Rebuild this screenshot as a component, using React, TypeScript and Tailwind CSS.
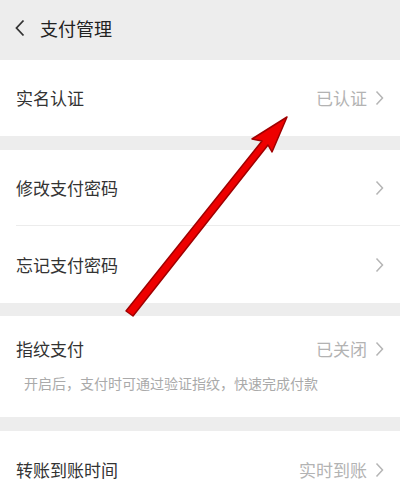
import React from "react";

const font = { fontFamily: '"Noto Sans CJK SC", "Noto Sans", sans-serif' };

const Chevron = () => (
  <svg width="9" height="16" viewBox="0 0 9 16" className="ml-2 shrink-0">
    <path d="M1.5 1.5 L7.5 8 L1.5 14.5" fill="none" stroke="#b5b5b5" strokeWidth="1.5" />
  </svg>
);

type RowProps = { label: string; value?: string; h: string };

const Row = ({ label, value, h }: RowProps) => (
  <div className={`flex items-center justify-between pl-4 pr-4 ${h}`}>
    <span className="text-[17px] text-[#333333]">{label}</span>
    <div className="flex items-center">
      {value && <span className="text-[17px] text-[#b3b3b3]">{value}</span>}
      <Chevron />
    </div>
  </div>
);

export default function App() {
  return (
    <div className="relative w-[400px] h-[500px] overflow-hidden bg-[#ededed]" style={font}>
      <div className="flex items-center h-[60px] pl-[14px] pb-1">
        <svg width="12" height="18" viewBox="0 0 12 18">
          <path d="M9.5 1.5 L2.5 9 L9.5 16.5" fill="none" stroke="#333333" strokeWidth="1.8" />
        </svg>
        <span className="ml-[14px] text-[18px] text-[#222222]">支付管理</span>
      </div>

      <div className="bg-white">
        <Row label="实名认证" value="已认证" h="h-[76px]" />
      </div>

      <div className="mt-[14px] bg-white">
        <Row label="修改支付密码" h="h-[75px]" />
        <div className="ml-4 h-px bg-[#ececec]" />
        <Row label="忘记支付密码" h="h-[77px]" />
      </div>

      <div className="mt-[13px] bg-white h-[101px]">
        <div className="flex items-center justify-between px-4 pt-[20px]">
          <span className="text-[17px] text-[#333333]">指纹支付</span>
          <div className="flex items-center">
            <span className="text-[17px] text-[#b3b3b3]">已关闭</span>
            <Chevron />
          </div>
        </div>
        <p className="pl-6 mt-[11px] text-[14px] text-[#aaaaaa]">开启后，支付时可通过验证指纹，快速完成付款</p>
      </div>

      <div className="mt-[14px] bg-white">
        <Row label="转账到账时间" value="实时到账" h="h-[78px]" />
      </div>

      <svg className="absolute left-0 top-0 pointer-events-none" width="400" height="500" viewBox="0 0 400 500">
        <path
          d="M126 311 L262 141 L252 139 L287 117 L272 152 L268 145 L133 316 Z"
          fill="#ee0000"
          stroke="#a00000"
          strokeWidth="1.5"
          strokeLinejoin="round"
        />
      </svg>
    </div>
  );
}
